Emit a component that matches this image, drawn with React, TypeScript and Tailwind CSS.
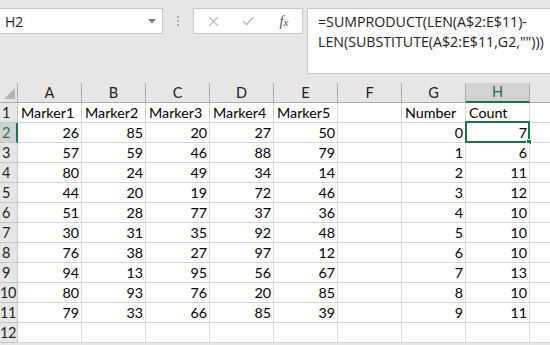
import React from "react";

const cols = ["A", "B", "C", "D", "E", "F", "G", "H"];
const data: (string | number)[][] = [
  ["Marker1", "Marker2", "Marker3", "Marker4", "Marker5", "", "Number", "Count"],
  [26, 85, 20, 27, 50, "", 0, 7],
  [57, 59, 46, 88, 79, "", 1, 6],
  [80, 24, 49, 34, 14, "", 2, 11],
  [44, 20, 19, 72, 46, "", 3, 12],
  [51, 28, 77, 37, 36, "", 4, 10],
  [30, 31, 35, 92, 48, "", 5, 10],
  [76, 38, 27, 97, 12, "", 6, 10],
  [94, 13, 95, 56, 67, "", 7, 13],
  [80, 93, 76, 20, 85, "", 8, 10],
  [79, 33, 66, 85, 39, "", 9, 11],
  ["", "", "", "", "", "", "", ""],
];

const cellFont = { fontFamily: "Lato, 'Open Sans', sans-serif" };

export default function App() {
  return (
    <div className="w-[550px] h-[345px] bg-[#e6e6e6] overflow-hidden relative" style={{ fontFamily: "'Open Sans', 'Noto Sans', sans-serif" }}>
      {/* Toolbar */}
      <div className="flex items-start pt-[8px] h-[83px]">
        <div className="w-[163px] h-[26px] bg-white border border-[#c6c6c6] border-l-0 flex items-center justify-between pl-[5px] pr-[6px]">
          <span className="text-[14px] text-[#222]">H2</span>
          <svg width="8" height="5" viewBox="0 0 8 5"><path d="M0 0H8L4 4.5Z" fill="#7a7a7a" /></svg>
        </div>
        <div className="w-[30px] h-[26px] flex flex-col items-center justify-center gap-[2px]">
          <div className="w-[2px] h-[2px] bg-[#aaa]" />
          <div className="w-[2px] h-[2px] bg-[#aaa]" />
          <div className="w-[2px] h-[2px] bg-[#aaa]" />
        </div>
        <div className="w-[110px] h-[26px] bg-white border border-[#c6c6c6] flex items-center">
          <div className="w-[36px] flex justify-center pl-[2px]">
            <svg width="11" height="11" viewBox="0 0 11 11"><path d="M1 1L10 10M10 1L1 10" stroke="#bdbdbd" strokeWidth="1.3" /></svg>
          </div>
          <div className="w-[36px] flex justify-center">
            <svg width="12" height="10" viewBox="0 0 12 10"><path d="M1 5L4.5 8.5L11 1.5" stroke="#bdbdbd" strokeWidth="1.6" fill="none" /></svg>
          </div>
          <div className="w-[36px] flex justify-center">
            <span className="text-[14px] italic text-[#555]" style={{ fontFamily: "'Liberation Serif', serif" }}>f<span className="text-[11px]">x</span></span>
          </div>
        </div>
        <div className="ml-[4px] flex-1 h-[66px] bg-white border border-[#c6c6c6] border-r-0 pl-[10px] pt-[3px] text-[14.2px] leading-[20px] text-[#222]">
          <div>=SUMPRODUCT(LEN(A$2:E$11)-</div>
          <div>LEN(SUBSTITUTE(A$2:E$11,G2,"")))</div>
        </div>
      </div>

      {/* Grid */}
      <div className="grid grid-cols-[18px_repeat(8,64px)_1fr]" style={cellFont}>
        {/* header row */}
        <div className="h-[20px] border-r border-b border-[#ababab] bg-[#e6e6e6] relative overflow-hidden">
          <svg className="absolute left-[4px] top-[5px]" width="11" height="11" viewBox="0 0 11 11"><path d="M11 0V11H0Z" fill="#b4b4b4" /></svg>
        </div>
        {cols.map((c) => (
          <div
            key={c}
            className={
              c === "H"
                ? "h-[20px] border-r border-[#ababab] bg-[#d2d2d2] border-b-2 border-b-[#217346] flex items-center justify-center text-[14.5px] text-[#217346]"
                : "h-[20px] border-r border-b border-[#ababab] bg-[#e6e6e6] flex items-center justify-center text-[14.5px] text-[#222]"
            }
          >
            {c}
          </div>
        ))}
        <div className="h-[20px] border-b border-[#ababab] bg-[#e6e6e6]" />

        {data.map((row, ri) => {
          const rn = ri + 1;
          const sel = rn === 2;
          return (
            <React.Fragment key={rn}>
              <div
                className={
                  sel
                    ? "h-[20px] border-b border-[#c6c6c6] border-r-2 border-r-[#217346] bg-[#d2d2d2] overflow-hidden text-[14.5px] text-[#217346]"
                    : "h-[20px] border-b border-r border-[#c6c6c6] bg-[#e6e6e6] overflow-hidden text-[14.5px] text-[#222]"
                }
              >
                <div className={rn < 10 ? "pl-[2px] leading-[19px]" : "pl-0 leading-[19px] tracking-[-0.5px]"}>{rn}</div>
              </div>
              {row.map((v, ci) => {
                const isNum = typeof v === "number";
                const isSel = sel && ci === 7;
                return (
                  <div
                    key={ci}
                    className={
                      "h-[20px] bg-white border-r border-b border-[#d4d4d4] text-[14.3px] text-black leading-[19px] whitespace-nowrap relative " +
                      (isNum ? "text-right pr-[2px]" : "text-left pl-[3px]")
                    }
                  >
                    {v}
                    {isSel && (
                      <div className="absolute -top-[2px] -left-[1px] -right-[1px] -bottom-[1px] border-2 border-[#217346]">
                        <div className="absolute -right-[4px] -bottom-[4px] w-[6px] h-[6px] bg-[#217346] border border-white" />
                      </div>
                    )}
                  </div>
                );
              })}
              <div className="h-[20px] bg-white border-b border-[#d4d4d4]" />
            </React.Fragment>
          );
        })}
      </div>
    </div>
  );
}
